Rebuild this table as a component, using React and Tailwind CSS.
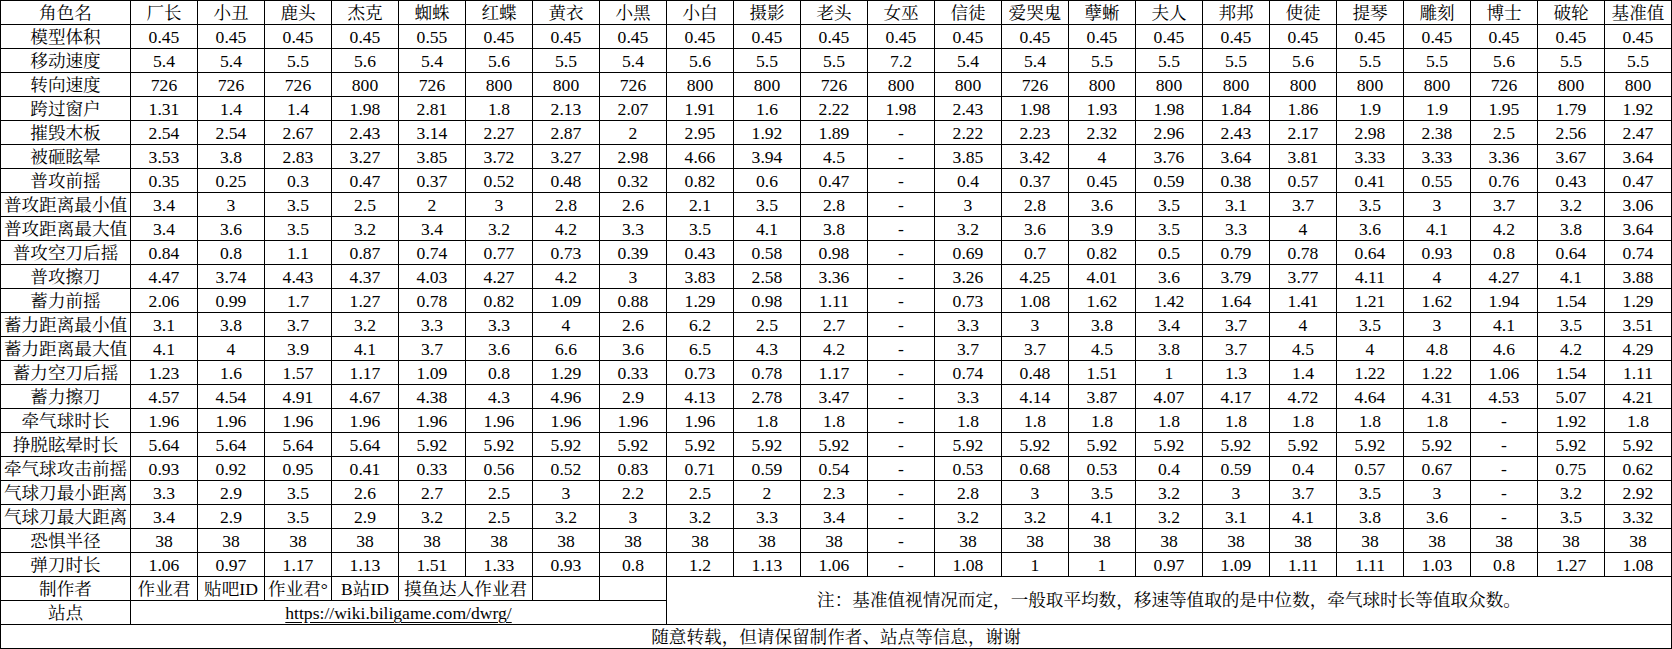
import React from "react";

const heads = ["厂长","小丑","鹿头","杰克","蜘蛛","红蝶","黄衣","小黑","小白","摄影","老头","女巫","信徒","爱哭鬼","孽蜥","夫人","邦邦","使徒","提琴","雕刻","博士","破轮","基准值"];

const rows = [
  ["模型体积","0.45 0.45 0.45 0.45 0.55 0.45 0.45 0.45 0.45 0.45 0.45 0.45 0.45 0.45 0.45 0.45 0.45 0.45 0.45 0.45 0.45 0.45 0.45"],
  ["移动速度","5.4 5.4 5.5 5.6 5.4 5.6 5.5 5.4 5.6 5.5 5.5 7.2 5.4 5.4 5.5 5.5 5.5 5.6 5.5 5.5 5.6 5.5 5.5"],
  ["转向速度","726 726 726 800 726 800 800 726 800 800 726 800 800 726 800 800 800 800 800 800 726 800 800"],
  ["跨过窗户","1.31 1.4 1.4 1.98 2.81 1.8 2.13 2.07 1.91 1.6 2.22 1.98 2.43 1.98 1.93 1.98 1.84 1.86 1.9 1.9 1.95 1.79 1.92"],
  ["摧毁木板","2.54 2.54 2.67 2.43 3.14 2.27 2.87 2 2.95 1.92 1.89 - 2.22 2.23 2.32 2.96 2.43 2.17 2.98 2.38 2.5 2.56 2.47"],
  ["被砸眩晕","3.53 3.8 2.83 3.27 3.85 3.72 3.27 2.98 4.66 3.94 4.5 - 3.85 3.42 4 3.76 3.64 3.81 3.33 3.33 3.36 3.67 3.64"],
  ["普攻前摇","0.35 0.25 0.3 0.47 0.37 0.52 0.48 0.32 0.82 0.6 0.47 - 0.4 0.37 0.45 0.59 0.38 0.57 0.41 0.55 0.76 0.43 0.47"],
  ["普攻距离最小值","3.4 3 3.5 2.5 2 3 2.8 2.6 2.1 3.5 2.8 - 3 2.8 3.6 3.5 3.1 3.7 3.5 3 3.7 3.2 3.06"],
  ["普攻距离最大值","3.4 3.6 3.5 3.2 3.4 3.2 4.2 3.3 3.5 4.1 3.8 - 3.2 3.6 3.9 3.5 3.3 4 3.6 4.1 4.2 3.8 3.64"],
  ["普攻空刀后摇","0.84 0.8 1.1 0.87 0.74 0.77 0.73 0.39 0.43 0.58 0.98 - 0.69 0.7 0.82 0.5 0.79 0.78 0.64 0.93 0.8 0.64 0.74"],
  ["普攻擦刀","4.47 3.74 4.43 4.37 4.03 4.27 4.2 3 3.83 2.58 3.36 - 3.26 4.25 4.01 3.6 3.79 3.77 4.11 4 4.27 4.1 3.88"],
  ["蓄力前摇","2.06 0.99 1.7 1.27 0.78 0.82 1.09 0.88 1.29 0.98 1.11 - 0.73 1.08 1.62 1.42 1.64 1.41 1.21 1.62 1.94 1.54 1.29"],
  ["蓄力距离最小值","3.1 3.8 3.7 3.2 3.3 3.3 4 2.6 6.2 2.5 2.7 - 3.3 3 3.8 3.4 3.7 4 3.5 3 4.1 3.5 3.51"],
  ["蓄力距离最大值","4.1 4 3.9 4.1 3.7 3.6 6.6 3.6 6.5 4.3 4.2 - 3.7 3.7 4.5 3.8 3.7 4.5 4 4.8 4.6 4.2 4.29"],
  ["蓄力空刀后摇","1.23 1.6 1.57 1.17 1.09 0.8 1.29 0.33 0.73 0.78 1.17 - 0.74 0.48 1.51 1 1.3 1.4 1.22 1.22 1.06 1.54 1.11"],
  ["蓄力擦刀","4.57 4.54 4.91 4.67 4.38 4.3 4.96 2.9 4.13 2.78 3.47 - 3.3 4.14 3.87 4.07 4.17 4.72 4.64 4.31 4.53 5.07 4.21"],
  ["牵气球时长","1.96 1.96 1.96 1.96 1.96 1.96 1.96 1.96 1.96 1.8 1.8 - 1.8 1.8 1.8 1.8 1.8 1.8 1.8 1.8 - 1.92 1.8"],
  ["挣脱眩晕时长","5.64 5.64 5.64 5.64 5.92 5.92 5.92 5.92 5.92 5.92 5.92 - 5.92 5.92 5.92 5.92 5.92 5.92 5.92 5.92 - 5.92 5.92"],
  ["牵气球攻击前摇","0.93 0.92 0.95 0.41 0.33 0.56 0.52 0.83 0.71 0.59 0.54 - 0.53 0.68 0.53 0.4 0.59 0.4 0.57 0.67 - 0.75 0.62"],
  ["气球刀最小距离","3.3 2.9 3.5 2.6 2.7 2.5 3 2.2 2.5 2 2.3 - 2.8 3 3.5 3.2 3 3.7 3.5 3 - 3.2 2.92"],
  ["气球刀最大距离","3.4 2.9 3.5 2.9 3.2 2.5 3.2 3 3.2 3.3 3.4 - 3.2 3.2 4.1 3.2 3.1 4.1 3.8 3.6 - 3.5 3.32"],
  ["恐惧半径","38 38 38 38 38 38 38 38 38 38 38 - 38 38 38 38 38 38 38 38 38 38 38"],
  ["弹刀时长","1.06 0.97 1.17 1.13 1.51 1.33 0.93 0.8 1.2 1.13 1.06 - 1.08 1 1 0.97 1.09 1.11 1.11 1.03 0.8 1.27 1.08"],
];

const cell = "bg-white text-center leading-[24px] whitespace-nowrap overflow-visible";

export default function App() {
  return (
    <div
      className="w-[1672px] h-[649px] bg-white text-black text-[17.6px]"
      style={{ fontFamily: '"Liberation Serif", "Noto Serif CJK SC", "Noto Sans CJK SC", serif' }}
    >
      <div className="grid grid-cols-[129px_repeat(23,66px)] auto-rows-[23px] gap-px p-px bg-black w-[1672px]">
        <div className={cell}>角色名</div>
        {heads.map((h) => (
          <div key={h} className={cell}>{h}</div>
        ))}
        {rows.map(([label, vals]) => (
          <React.Fragment key={label}>
            <div className={cell}>{label}</div>
            {vals.split(" ").map((v, i) => (
              <div key={i} className={cell}>{v}</div>
            ))}
          </React.Fragment>
        ))}
        <div className={cell}>制作者</div>
        <div className={cell}>作业君</div>
        <div className={cell}>贴吧ID</div>
        <div className={cell}>作业君°</div>
        <div className={cell}>B站ID</div>
        <div className={`${cell} col-span-2`}>摸鱼达人作业君</div>
        <div className={cell}></div>
        <div className={cell}></div>
        <div className="bg-white col-span-15 row-span-2 flex items-center justify-center whitespace-nowrap">
          注：基准值视情况而定，一般取平均数，移速等值取的是中位数，牵气球时长等值取众数。
        </div>
        <div className={cell}>站点</div>
        <div className={`${cell} col-span-8`}>
          <span className="underline underline-offset-[3px]">https://wiki.biligame.com/dwrg/</span>
        </div>
        <div className={`${cell} col-span-24`}>随意转载，但请保留制作者、站点等信息，谢谢</div>
      </div>
    </div>
  );
}
